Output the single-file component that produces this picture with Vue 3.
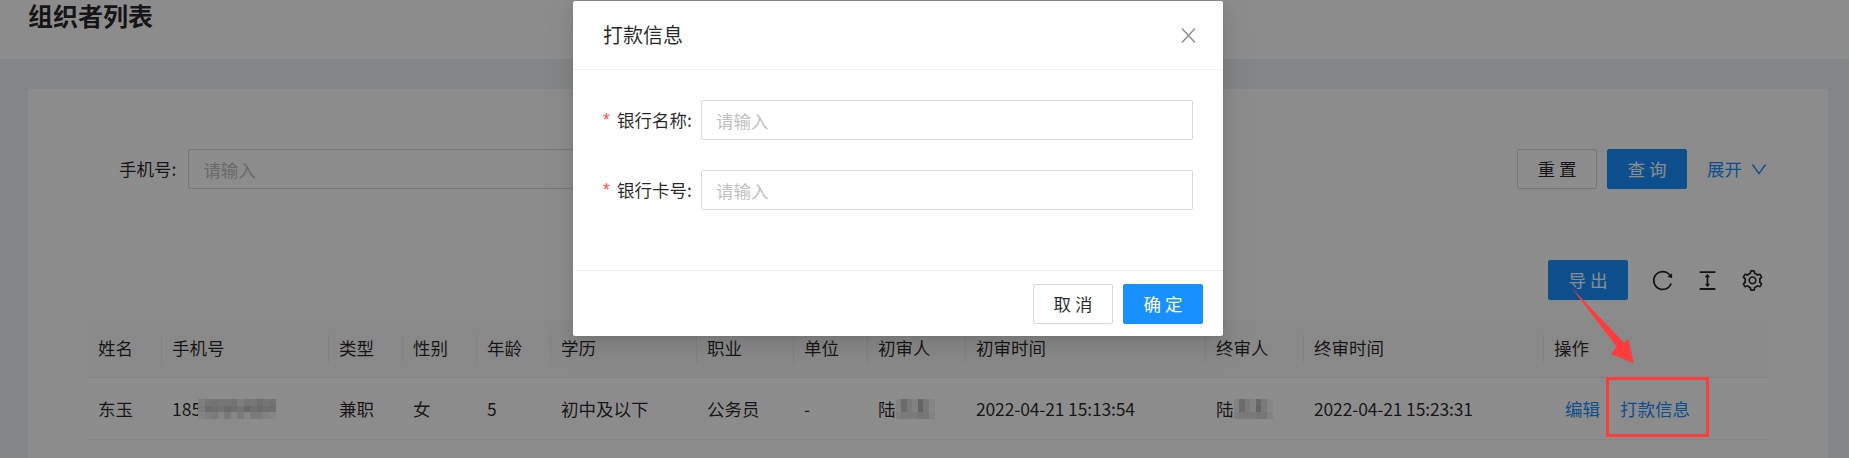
<script setup>
const columns = ['姓名', '手机号', '类型', '性别', '年龄', '学历', '职业', '单位', '初审人', '初审时间', '终审人', '终审时间', '操作']

// 打码区域的灰度,0 = 最浅,9 = 最深
const phoneBlur = [
  '245445244645',
  '376576586766',
  '123030303310',
]
const nameBlur = ['1731830', '1731930', '2333441']

function cellStyle(level) {
  const shade = 244 - Number(level) * 7
  return { background: `rgb(${shade}, ${shade}, ${shade + 2})` }
}
</script>

<template>
  <div class="page">
    <header class="page-head">
      <h1>组织者列表</h1>
    </header>

    <main class="card">
      <div class="search">
        <div class="search-field">
          <label>手机号:</label>
          <input class="input" placeholder="请输入" />
        </div>
        <div class="search-actions">
          <button class="btn">重 置</button>
          <button class="btn primary">查 询</button>
          <a class="expand">
            展开
            <svg width="16" height="16" viewBox="0 0 16 16" fill="none" stroke="currentColor" stroke-width="1.4">
              <path d="M1.5 3.5 8 12.5l6.5-9" />
            </svg>
          </a>
        </div>
      </div>

      <div class="toolbar">
        <button class="btn primary">导 出</button>
        <div class="tools">
          <svg viewBox="64 64 896 896" fill="currentColor">
            <path d="M909.1 209.3l-56.4 44.1C775.8 155.1 656.2 92 521.9 92 290 92 102.3 279.5 102 511.5 101.7 743.7 289.8 932 521.9 932c181.3 0 335.8-115 394.6-276.1 1.5-4.2-.7-8.9-4.9-10.3l-56.7-19.5a8 8 0 0 0-10.1 4.8c-1.8 5-3.8 10-5.9 14.9-17.3 41-42.1 77.8-73.7 109.4A344.77 344.77 0 0 1 655.9 829c-42.3 17.9-87.4 27-133.8 27-46.5 0-91.5-9.1-133.8-27A341.5 341.5 0 0 1 279 755.2a342.16 342.16 0 0 1-73.7-109.4c-17.9-42.4-27-87.4-27-133.9s9.1-91.5 27-133.9c17.3-41 42.1-77.8 73.7-109.4 31.6-31.6 68.4-56.4 109.3-73.8 42.3-17.9 87.4-27 133.8-27 46.5 0 91.5 9.1 133.8 27a341.5 341.5 0 0 1 109.3 73.8c9.9 9.9 19.2 20.4 27.8 31.4l-60.2 47a8 8 0 0 0 3 14.1l175.6 43c5 1.2 9.9-2.6 9.9-7.7l.8-180.9c-.1-6.6-7.8-10.3-13-6.2z" />
          </svg>
          <svg viewBox="64 64 896 896" fill="currentColor">
            <path d="M840 836H184c-4.4 0-8 3.6-8 8v60c0 4.4 3.6 8 8 8h656c4.4 0 8-3.6 8-8v-60c0-4.4-3.6-8-8-8zm0-724H184c-4.4 0-8 3.6-8 8v60c0 4.4 3.6 8 8 8h656c4.4 0 8-3.6 8-8v-60c0-4.4-3.6-8-8-8zM610.8 378c6 0 9.4-7 5.7-11.7L515.7 238.7a7.14 7.14 0 0 0-11.3 0L403.6 366.3a7.23 7.23 0 0 0 5.7 11.7H476v268h-62.8c-6 0-9.4 7-5.7 11.7l100.8 127.5c2.9 3.7 8.5 3.7 11.3 0l100.8-127.5c3.7-4.7.4-11.7-5.7-11.7H548V378h62.8z" />
          </svg>
          <svg viewBox="64 64 896 896" fill="currentColor">
            <path d="M924.8 625.7l-65.5-56c3.1-19 4.7-38.4 4.7-57.8s-1.6-38.8-4.7-57.8l65.5-56a32.03 32.03 0 0 0 9.3-35.2l-.9-2.6a443.74 443.74 0 0 0-79.7-137.9l-1.8-2.1a32.12 32.12 0 0 0-35.1-9.5l-81.3 28.9c-30-24.6-63.5-44-99.7-57.6l-15.7-85a32.05 32.05 0 0 0-25.8-25.7l-2.7-.5c-52.1-9.4-106.9-9.4-159 0l-2.7.5a32.05 32.05 0 0 0-25.8 25.7l-15.8 85.4a351.86 351.86 0 0 0-99 57.4l-81.9-29.1a32 32 0 0 0-35.1 9.5l-1.8 2.1a446.02 446.02 0 0 0-79.7 137.9l-.9 2.6c-4.5 12.5-.8 26.5 9.3 35.2l66.3 56.6c-3.1 18.8-4.6 38-4.6 57.1 0 19.2 1.5 38.4 4.6 57.1L99 625.5a32.03 32.03 0 0 0-9.3 35.2l.9 2.6c18.1 50.4 44.9 96.9 79.7 137.9l1.8 2.1a32.12 32.12 0 0 0 35.1 9.5l81.9-29.1c29.8 24.5 63.1 43.9 99 57.4l15.8 85.4a32.05 32.05 0 0 0 25.8 25.7l2.7.5a449.4 449.4 0 0 0 159 0l2.7-.5a32.05 32.05 0 0 0 25.8-25.7l15.7-85a350 350 0 0 0 99.7-57.6l81.3 28.9a32 32 0 0 0 35.1-9.5l1.8-2.1c34.8-41.1 61.6-87.5 79.7-137.9l.9-2.6c4.5-12.3.8-26.3-9.3-35zM788.3 465.9c2.5 15.1 3.8 30.6 3.8 46.1s-1.3 31-3.8 46.1l-6.6 40.1 74.7 63.9a370.03 370.03 0 0 1-42.6 73.6L721 702.8l-31.4 25.8c-23.9 19.6-50.5 35-79.3 45.8l-38.1 14.3-17.9 97a377.5 377.5 0 0 1-85 0l-17.9-97.2-37.8-14.5c-28.5-10.8-55-26.2-78.7-45.7l-31.4-25.9-93.4 33.2c-17-22.9-31.2-47.6-42.6-73.6l75.5-64.5-6.5-40c-2.4-14.9-3.7-30.3-3.7-45.5 0-15.3 1.2-30.6 3.7-45.5l6.5-40-75.5-64.5c11.3-26.1 25.6-50.7 42.6-73.6l93.4 33.2 31.4-25.9c23.7-19.5 50.2-34.9 78.7-45.7l37.9-14.3 17.9-97.2c28.1-3.2 56.8-3.2 85 0l17.9 97 38.1 14.3c28.7 10.8 55.4 26.2 79.3 45.8l31.4 25.8 92.8-32.9c17 22.9 31.2 47.6 42.6 73.6L781.8 426l6.5 39.9zM512 326c-97.2 0-176 78.8-176 176s78.8 176 176 176 176-78.8 176-176-78.8-176-176-176zm79.2 255.2A111.6 111.6 0 0 1 512 614c-29.9 0-58-11.7-79.2-32.8A111.6 111.6 0 0 1 400 502c0-29.9 11.7-58 32.8-79.2C454 401.6 482.1 390 512 390c29.9 0 58 11.6 79.2 32.8A111.6 111.6 0 0 1 624 502c0 29.9-11.7 58-32.8 79.2z" />
          </svg>
        </div>
      </div>

      <div class="table">
        <div v-for="col in columns" :key="col" class="th">{{ col }}</div>

        <div class="td">东玉</div>
        <div class="td">
          185
          <span class="blur phone">
            <template v-for="(row, r) in phoneBlur" :key="r">
              <i v-for="(level, c) in row" :key="c" :style="cellStyle(level)"></i>
            </template>
          </span>
        </div>
        <div class="td">兼职</div>
        <div class="td">女</div>
        <div class="td">5</div>
        <div class="td">初中及以下</div>
        <div class="td">公务员</div>
        <div class="td">-</div>
        <div class="td">
          陆
          <span class="blur name">
            <template v-for="(row, r) in nameBlur" :key="r">
              <i v-for="(level, c) in row" :key="c" :style="cellStyle(level)"></i>
            </template>
          </span>
        </div>
        <div class="td time">2022-04-21 15:13:54</div>
        <div class="td">
          陆
          <span class="blur name">
            <template v-for="(row, r) in nameBlur" :key="r">
              <i v-for="(level, c) in row" :key="c" :style="cellStyle(level)"></i>
            </template>
          </span>
        </div>
        <div class="td time">2022-04-21 15:23:31</div>
        <div class="td actions">
          <a>编辑</a>
          <a>打款信息</a>
        </div>
      </div>
    </main>

    <div class="mask"></div>

    <section class="modal">
      <div class="modal-head">
        <span>打款信息</span>
        <svg class="close" width="15" height="15" viewBox="0 0 15 15" fill="none" stroke="currentColor" stroke-width="1.4">
          <path d="M1 .5 14 14.5M14 .5 1 14.5" />
        </svg>
      </div>
      <div class="modal-body">
        <div class="form-row">
          <label><em>*</em>银行名称:</label>
          <input class="input" placeholder="请输入" />
        </div>
        <div class="form-row">
          <label><em>*</em>银行卡号:</label>
          <input class="input" placeholder="请输入" />
        </div>
      </div>
      <div class="modal-foot">
        <button class="btn">取 消</button>
        <button class="btn primary">确 定</button>
      </div>
    </section>

    <!-- 截图上的红色标注 -->
    <svg class="arrow" width="70" height="80" viewBox="1570 286 70 80">
      <path d="M1571.7 288 1616.7 346.7 1611 354 1634 363.3 1628.3 339.3 1624 342.7Z" fill="#ff3b3b" />
    </svg>
    <div class="mark"></div>
  </div>
</template>

<style scoped>
.page {
  position: relative;
  width: 1849px;
  height: 458px;
  overflow: hidden;
  background: #f0f2f5;
  color: rgba(0, 0, 0, 0.85);
  font-family: "Noto Sans CJK SC", "Open Sans", sans-serif;
  font-size: 17.5px;
  line-height: 1.5;
}

.page-head {
  height: 59px;
  padding-left: 28px;
  background: #fff;
}

.page-head h1 {
  margin: 0;
  font-size: 25px;
  font-weight: 600;
  line-height: 30px;
}

.card {
  height: 369px;
  margin: 30px 21px 0 28px;
  padding: 60px 60px 0;
  background: #fff;
}

.search {
  display: flex;
  justify-content: space-between;
  height: 40px;
  padding-right: 1px;
}

.search-field {
  display: flex;
  align-items: center;
  gap: 12px;
  padding-left: 31px;
}

.search-field .input {
  width: 800px;
}

.search-actions {
  display: flex;
  align-items: center;
  gap: 10px;
}

.input {
  box-sizing: border-box;
  height: 40px;
  padding: 0 14px;
  border: 1px solid #d9d9d9;
  border-radius: 2px;
  outline: none;
  background: #fff;
  font: inherit;
  color: inherit;
}

.input::placeholder {
  color: #bfbfbf;
}

.btn {
  box-sizing: border-box;
  width: 80px;
  height: 40px;
  padding: 0;
  border: 1px solid #d9d9d9;
  border-radius: 2px;
  background: #fff;
  box-shadow: 0 2px 0 rgba(0, 0, 0, 0.015);
  font: inherit;
  color: inherit;
}

.btn.primary {
  border-color: #1890ff;
  background: #1890ff;
  color: #fff;
}

.expand {
  display: flex;
  align-items: center;
  gap: 9px;
  margin-left: 10px;
  color: #1890ff;
}

.toolbar {
  display: flex;
  justify-content: flex-end;
  align-items: center;
  gap: 24px;
  height: 40px;
  margin-top: 71px;
  padding-right: 5px;
}

.tools {
  display: flex;
  gap: 24px;
}

.tools svg {
  display: block;
  width: 21px;
  height: 21px;
}

.table {
  display: grid;
  grid-template-columns: 74px 167px 74px 74px 74px 146px 97px 74px 98px 240px 98px 240px 224px;
  grid-template-rows: 58px 62px;
  margin-top: 20px;
}

.th,
.td {
  display: flex;
  align-items: center;
  padding: 0 10px;
  border-bottom: 1px solid #f0f0f0;
  white-space: nowrap;
}

.th {
  position: relative;
  background: #fafafa;
}

.th:not(:nth-child(13))::after {
  content: "";
  position: absolute;
  top: 50%;
  right: 0;
  width: 1px;
  height: 28px;
  transform: translateY(-50%);
  background: rgba(0, 0, 0, 0.06);
}

.td {
  padding-top: 1px;
}

.time {
  letter-spacing: -0.15px;
}

.blur {
  display: grid;
  grid-auto-rows: 6.67px;
}

.blur i {
  display: block;
}

.blur.phone {
  grid-template-columns: repeat(12, 6.5px);
  margin-left: -3px;
}

.blur.name {
  grid-template-columns: repeat(7, 5.6px);
}

.actions {
  gap: 20px;
  padding-left: 21px;
  color: #1890ff;
}

.mask {
  position: absolute;
  inset: 0;
  background: rgba(0, 0, 0, 0.45);
}

.modal {
  position: absolute;
  top: 1px;
  left: 573px;
  display: flex;
  flex-direction: column;
  width: 650px;
  height: 335px;
  border-radius: 2px;
  background: #fff;
  box-shadow: 0 3px 6px -4px rgba(0, 0, 0, 0.12), 0 6px 16px 0 rgba(0, 0, 0, 0.08), 0 9px 28px 8px rgba(0, 0, 0, 0.05);
}

.modal-head {
  display: flex;
  justify-content: space-between;
  align-items: center;
  box-sizing: border-box;
  height: 69px;
  padding: 0 27px 0 30px;
  border-bottom: 1px solid #f0f0f0;
  font-size: 20px;
}

.close {
  color: #8c8c8c;
}

.modal-body {
  flex: 1;
  padding: 30px 30px 0;
}

.form-row {
  display: flex;
  align-items: center;
  gap: 8px;
  margin-bottom: 30px;
}

.form-row label {
  display: flex;
  align-items: center;
  width: 90px;
  white-space: nowrap;
}

.form-row em {
  width: 14px;
  color: #ff4d4f;
  font-style: normal;
  font-family: "Liberation Sans", sans-serif;
}

.form-row .input {
  flex: 1;
}

.modal-foot {
  display: flex;
  justify-content: flex-end;
  gap: 10px;
  padding: 13px 20px 12px;
  border-top: 1px solid #f0f0f0;
}

.arrow {
  position: absolute;
  top: 286px;
  left: 1570px;
}

.mark {
  position: absolute;
  top: 377px;
  left: 1606px;
  box-sizing: border-box;
  width: 103px;
  height: 60px;
  border: 3px solid #ff3b3b;
}
</style>

<style>
html,
body {
  margin: 0;
  overflow: hidden;
}
</style>
